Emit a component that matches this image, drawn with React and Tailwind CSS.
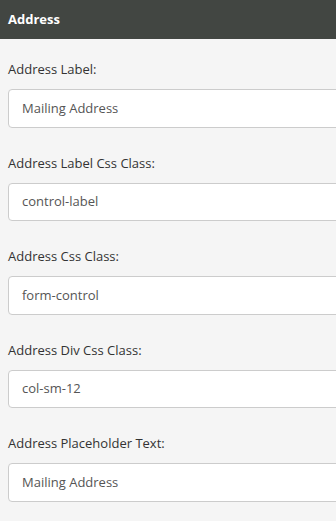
export default function App() {
  const fields = [
    ["Address Label:", "Mailing Address"],
    ["Address Label Css Class:", "control-label"],
    ["Address Css Class:", "form-control"],
    ["Address Div Css Class:", "col-sm-12"],
    ["Address Placeholder Text:", "Mailing Address"],
  ];
  return (
    <div className="w-[336px] h-[521px] overflow-hidden bg-[#f5f5f5]" style={{ fontFamily: '"Open Sans", sans-serif' }}>
      <div className="h-[39px] bg-[#424642] flex items-center pl-2 text-white text-[13px] font-bold">Address</div>
      <div className="pt-5 pl-2">
        {fields.map(([label, value]) => (
          <div key={label} className="mb-[25px]">
            <div className="h-5 leading-5 text-[13px] text-[#333]">{label}</div>
            <div className="mt-[10px] w-[360px] h-[38.5px] bg-white border border-[#ccc] rounded-[4px] flex items-center pl-[13px] text-[13px] text-[#555]">{value}</div>
          </div>
        ))}
      </div>
    </div>
  );
}
